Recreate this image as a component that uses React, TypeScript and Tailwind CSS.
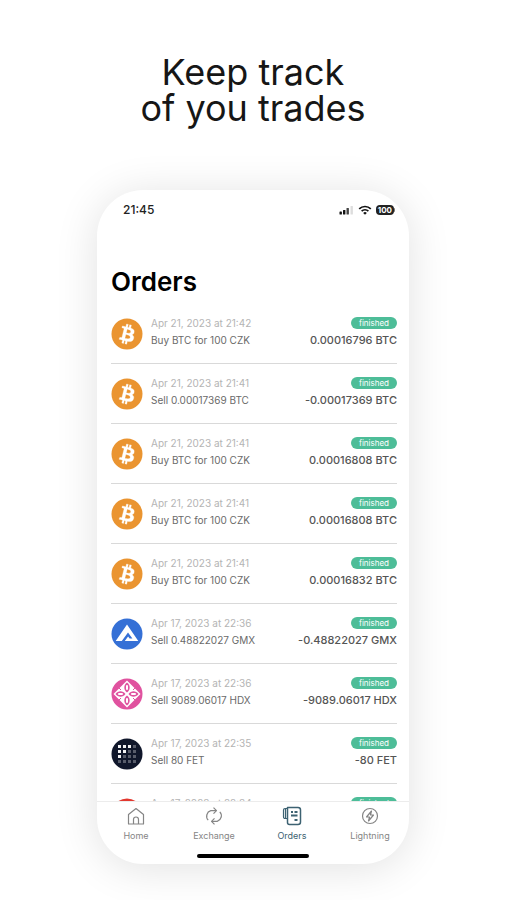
import { useState } from "react";
import type { ReactNode } from "react";

type Coin = "BTC" | "GMX" | "HDX" | "FET" | "RED";

interface Order {
  id: number;
  coin: Coin;
  date: string;
  title: string;
  amount: string;
}

const orders: Order[] = [
  { id: 1, coin: "BTC", date: "Apr 21, 2023 at 21:42", title: "Buy BTC for 100 CZK", amount: "0.00016796 BTC" },
  { id: 2, coin: "BTC", date: "Apr 21, 2023 at 21:41", title: "Sell 0.00017369 BTC", amount: "-0.00017369 BTC" },
  { id: 3, coin: "BTC", date: "Apr 21, 2023 at 21:41", title: "Buy BTC for 100 CZK", amount: "0.00016808 BTC" },
  { id: 4, coin: "BTC", date: "Apr 21, 2023 at 21:41", title: "Buy BTC for 100 CZK", amount: "0.00016808 BTC" },
  { id: 5, coin: "BTC", date: "Apr 21, 2023 at 21:41", title: "Buy BTC for 100 CZK", amount: "0.00016832 BTC" },
  { id: 6, coin: "GMX", date: "Apr 17, 2023 at 22:36", title: "Sell 0.48822027 GMX", amount: "-0.48822027 GMX" },
  { id: 7, coin: "HDX", date: "Apr 17, 2023 at 22:36", title: "Sell 9089.06017 HDX", amount: "-9089.06017 HDX" },
  { id: 8, coin: "FET", date: "Apr 17, 2023 at 22:35", title: "Sell 80 FET", amount: "-80 FET" },
  { id: 9, coin: "RED", date: "Apr 17, 2023 at 22:34", title: "", amount: "" },
];

// Coin logos, all drawn on a 32x32 disc
function CoinIcon({ coin }: { coin: Coin }) {
  if (coin === "BTC") {
    return (
      <svg viewBox="0 0 32 32" className="size-8 shrink-0" aria-hidden="true">
        <circle cx="16" cy="16" r="15.5" fill="#ea9430" />
        <path
          fill="#fff"
          stroke="#fff"
          strokeWidth="0.3"
          d="M23.19 14.02c.31-2.1-1.29-3.23-3.48-3.98l.71-2.85-1.73-.43-.69 2.77c-.46-.11-.92-.22-1.39-.33l.7-2.79-1.74-.43-.7 2.84c-.38-.09-.75-.17-1.11-.26l-2.39-.6-.46 1.85s1.28.3 1.26.31c.7.18.83.64.8 1.01l-2 8.02c-.09.22-.31.54-.81.42.02.02-1.26-.31-1.26-.31l-.86 1.98 2.26.56c.42.11.83.22 1.23.32l-.71 2.88 1.73.43.71-2.85c.47.13.93.25 1.38.36l-.7 2.83 1.73.43.72-2.87c2.96.56 5.18.33 6.12-2.34.76-2.15-.04-3.39-1.59-4.2 1.13-.26 1.98-1 2.21-2.53zm-3.96 5.55c-.53 2.15-4.16.99-5.33.7l.95-3.8c1.17.29 4.94.87 4.38 3.1zm.54-5.58c-.49 1.95-3.51.96-4.48.72l.86-3.45c.98.24 4.13.7 3.62 2.73z"
        />
      </svg>
    );
  }
  if (coin === "GMX") {
    return (
      <svg viewBox="0 0 32 32" className="size-8 shrink-0" aria-hidden="true">
        <circle cx="16" cy="16" r="15.5" fill="#3570d6" />
        <path fill="#fff" d="M16 6.5 27.3 23H13.8l3.3-4.6 1.5 2h2.8l-4.4-6L10.800 23H4.700z" />
      </svg>
    );
  }
  if (coin === "HDX") {
    return (
      <svg viewBox="0 0 32 32" className="size-8 shrink-0" aria-hidden="true">
        <circle cx="16" cy="16" r="15.5" fill="#e0529f" />
        <path d="m16 2.500 13.500 13.500L16 29.500 2.500 16z" fill="#fff" />
        <g fill="#e0529f">
          <path d="M16 4.500c3.600 2.600 3.600 7.400 0 10-3.600-2.600-3.600-7.400 0-10z" />
          <path d="M16 17.500c3.600 2.600 3.600 7.400 0 10-3.600-2.600-3.600-7.400 0-10z" />
          <path d="M4.500 16c2.600-3.600 7.400-3.600 10 0-2.600 3.600-7.400 3.600-10 0z" />
          <path d="M17.500 16c2.600-3.600 7.400-3.600 10 0-2.600 3.600-7.400 3.600-10 0z" />
        </g>
        <g stroke="#fff" strokeWidth="2" strokeLinecap="round">
          <path d="M16 8v3M16 21v3M8 16h3M21 16h3" />
        </g>
        <g stroke="#e0529f" strokeWidth="1">
          <path d="m8 10 2 2M24 10l-2 2M8 22l2-2M24 22l-2-2" />
        </g>
      </svg>
    );
  }
  if (coin === "FET") {
    const steps = [8, 13, 18, 23];
    return (
      <svg viewBox="0 0 32 32" className="size-8 shrink-0" aria-hidden="true">
        <circle cx="16" cy="16" r="15.5" fill="#10172b" />
        {steps.map((y, row) =>
          steps.map((x, col) => (
            <rect
              key={`${x}-${y}`}
              x={x - 1}
              y={y - 1}
              width="3"
              height="3"
              fill="#fff"
              opacity={row + col < 3 ? 0.95 : 0.3}
            />
          ))
        )}
      </svg>
    );
  }
  return (
    <svg viewBox="0 0 32 32" className="size-8 shrink-0" aria-hidden="true">
      <circle cx="16" cy="16" r="15.5" fill="#e2382f" />
    </svg>
  );
}

function StatusBar() {
  return (
    <div className="flex h-10 shrink-0 items-center justify-between pl-6.5 pr-3.5">
      <span className="text-xs font-medium text-[#222]">21:45</span>
      <div className="flex items-center gap-1">
        <svg viewBox="0 0 15 10" className="h-2.5 w-[15px]" aria-hidden="true">
          <rect x="0.5" y="6.5" width="2.4" height="3" rx="0.6" fill="#111" />
          <rect x="4" y="5" width="2.4" height="4.5" rx="0.6" fill="#111" />
          <rect x="7.5" y="3" width="2.4" height="6.5" rx="0.6" fill="#444" />
          <rect x="11.5" y="1" width="2.4" height="8.5" rx="0.6" fill="#ddd" />
        </svg>
        <svg viewBox="0 0 14 10" className="h-2.5 w-3.5" fill="none" stroke="#111" strokeWidth="1.7" aria-hidden="true">
          <path d="M1.2 3.9a8.2 8.2 0 0 1 11.6 0" />
          <path d="M3.6 6.2a4.9 4.9 0 0 1 6.8 0" />
          <path d="M7 9.8 5.2 8a2.5 2.5 0 0 1 3.6 0z" fill="#111" stroke="none" />
        </svg>
        <div className="flex items-center">
          <span className="rounded-sm bg-[#222] px-0.5 text-[8px] font-bold leading-[10px] text-white">100</span>
          <span className="h-1 w-px rounded-r bg-[#777]" />
        </div>
      </div>
    </div>
  );
}

function OrderRow({ order }: { order: Order }) {
  return (
    <li className="flex h-15 shrink-0 items-center gap-2 border-b border-[#d9d9d9]">
      <CoinIcon coin={order.coin} />
      <div className="min-w-0 flex-1 pb-1 text-[10px] leading-[17px]">
        <p className="whitespace-nowrap text-[#b4b4b4]">{order.date}</p>
        <p className="h-[17px] whitespace-nowrap text-[#6a6a6a]">{order.title}</p>
      </div>
      <div className="flex flex-col items-end pb-1 text-[11px] leading-[17px]">
        <span className="flex h-[17px] items-center">
          <span className="rounded-full bg-[#4dbd98] px-2 text-[8px] leading-3 text-white">finished</span>
        </span>
        <p className="h-[17px] whitespace-nowrap font-medium text-[#555]">{order.amount}</p>
      </div>
    </li>
  );
}

const tabs: { name: string; icon: ReactNode }[] = [
  {
    name: "Home",
    icon: (
      <>
        <path d="M2.5 8.5 10 2.5l7.500 6V18h-15z" />
        <path d="M7.5 18v-4.500a2.500 2.500 0 0 1 5 0V18" />
      </>
    ),
  },
  {
    name: "Exchange",
    icon: (
      <>
        <path d="M4.200 14.200A5.800 5.800 0 0 1 6.800 4.700H12" />
        <path d="m9.500 1.700 3 3-3 3" />
        <path d="M15.800 5.800a5.800 5.800 0 0 1-2.600 9.500H8" />
        <path d="m10.500 18.300-3-3 3-3" />
      </>
    ),
  },
  {
    name: "Orders",
    icon: (
      <>
        <path d="M5.500 1.500H16A2.500 2.500 0 0 1 18.500 4v12a2.500 2.500 0 0 1-2.500 2.500H7.500a2 2 0 0 1-2-2z" strokeWidth="1.500" />
        <path d="M5.500 2.500H3A1.500 1.500 0 0 0 1.500 4v7A1.500 1.500 0 0 0 3 12.500h2.500M3.500 3v9" />
        <path d="M9 6h2M12.500 6h3M9 9.500h6.500M12.500 14h3" strokeWidth="1.800" />
      </>
    ),
  },
  {
    name: "Lightning",
    icon: (
      <>
        <circle cx="10" cy="10" r="7.500" />
        <path d="m11.500 5-5 6h3l-1 4 5-6h-3z" />
      </>
    ),
  },
];

export default function App() {
  const [active, setActive] = useState("Orders");

  return (
    <main className="flex h-screen flex-col items-center bg-white px-6 pb-9 pt-[54px] font-['Inter','Liberation_Sans',sans-serif]">
      <h1 className="text-center text-[36px] leading-9 text-[#161616]">
        Keep track
        <br />
        of you trades
      </h1>

      <section className="mt-16 flex min-h-0 w-full max-w-[312px] flex-1 flex-col overflow-hidden rounded-[46px] bg-white shadow-[0_4px_44px_rgba(0,0,0,0.12)]">
        <StatusBar />
        <h2 className="mt-9 pl-3.5 text-[26px] font-semibold leading-8 text-black">Orders</h2>

        <ul className="mt-1.5 flex min-h-0 flex-1 flex-col overflow-hidden pl-3.5 pr-3">
          {orders.map((order) => (
            <OrderRow key={order.id} order={order} />
          ))}
        </ul>

        <nav className="shrink-0 border-t border-[#ececec] pb-1.5 pt-1">
          <div className="grid grid-cols-4">
            {tabs.map((tab) => (
              <button
                key={tab.name}
                type="button"
                onClick={() => setActive(tab.name)}
                className={`flex flex-col items-center gap-1 text-[9px] leading-3 ${
                  active === tab.name ? "text-[#3d6272]" : "text-[#858585]"
                }`}
              >
                <svg
                  viewBox="0 0 20 20"
                  className="size-5"
                  fill="none"
                  stroke="currentColor"
                  strokeWidth="1.2"
                  strokeLinejoin="round"
                  aria-hidden="true"
                >
                  {tab.icon}
                </svg>
                {tab.name}
              </button>
            ))}
          </div>
          <div className="mx-auto mt-3 h-1 w-28 rounded-full bg-black" />
        </nav>
      </section>
    </main>
  );
}
